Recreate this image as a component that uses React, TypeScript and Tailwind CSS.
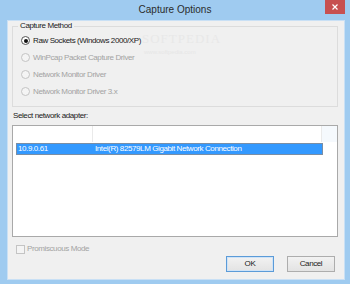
import React from 'react';

const Radio: React.FC<{ label: string; checked?: boolean; disabled?: boolean }> = ({ label, checked, disabled }) => (
  <div className="h-[17px] flex items-center">
    <span
      className={`w-[9px] h-[9px] rounded-full border flex items-center justify-center ${
        disabled ? 'border-[#c4c4c4] bg-[#f4f4f4]' : 'border-[#555] bg-white'
      }`}
    >
      {checked && <span className="w-[4px] h-[4px] rounded-full bg-[#111]" />}
    </span>
    <span className={`ml-[3px] ${disabled ? 'text-[#a3a3a3]' : 'text-[#1a1a1a]'}`}>{label}</span>
  </div>
);

const Button: React.FC<{ label: string; primary?: boolean }> = ({ label, primary }) => (
  <div
    className={`w-[48px] h-[16px] flex items-center justify-center border bg-gradient-to-b from-[#f2f2f2] to-[#e3e3e3] text-[#1a1a1a] ${
      primary ? 'border-[#5b9bd8] shadow-[inset_0_0_0_1px_#cfe3f7]' : 'border-[#adadad]'
    }`}
  >
    {label}
  </div>
);

export default function App() {
  return (
    <div className="w-[350px] h-[284px] bg-[#9fcbf0] flex flex-col overflow-hidden font-['Liberation_Sans',Arial,sans-serif] text-[8px] tracking-[-0.4px] leading-[10px]">
      {/* title bar */}
      <div className="h-[20px] relative flex items-center justify-center">
        <span className="text-[10px] tracking-normal text-[#2b2b2b] leading-[12px]">Capture Options</span>
        <div className="absolute right-[5px] top-0 w-[20px] h-[14px] bg-[#c75050] flex items-center justify-center">
          <svg width="6" height="6" viewBox="0 0 6 6">
            <path d="M0.5 0.5 L5.5 5.5 M5.5 0.5 L0.5 5.5" stroke="#fff" strokeWidth="1.2" />
          </svg>
        </div>
      </div>

      {/* client */}
      <div className="ml-[7px] mr-[5px] mb-[4px] flex-1 border border-[#c9e0f5] bg-[#f0f0f0] relative flex flex-col pl-[4px] pr-[6px] pt-[5px] pb-[7px]">
        {/* watermark */}
        <div className="absolute left-[134px] top-[11px] text-[13px] tracking-[1px] font-['Liberation_Serif',serif] text-[#e8e8e8] leading-[13px] pointer-events-none">
          SOFTPEDIA
        </div>
        <div className="absolute left-[136px] top-[28px] text-[6px] tracking-normal text-[#e6e6e6] leading-[6px] pointer-events-none">
          www.softpedia.com
        </div>

        {/* Capture Method group */}
        <div className="relative h-[81px] border border-[#dcdcdc] pl-[8px] pt-[5px]">
          <span className="absolute left-[5px] -top-[6px] px-[2px] bg-[#f0f0f0] text-[#1a1a1a]">Capture Method</span>
          <Radio label="Raw Sockets (Windows 2000/XP)" checked />
          <Radio label="WinPcap Packet Capture Driver" disabled />
          <Radio label="Network Monitor Driver" disabled />
          <Radio label="Network Monitor Driver 3.x" disabled />
        </div>

        <div className="mt-[4px] pl-[1px] text-[#1a1a1a]">Select network adapter:</div>

        {/* adapter list */}
        <div className="mt-[4px] h-[112px] border border-[#a9a9a9] bg-white flex flex-col">
          <div className="h-[16px] flex">
            <div className="w-[80px] border-r border-[#eaeaea]" />
            <div className="w-[229px] border-r border-[#eaeaea]" />
            <div className="flex-1 bg-[#f5f9fd]" />
          </div>
          <div className="ml-[3px] w-[307px] h-[12px] mt-[1px] bg-[#3399ff] border border-[#7a8ea5] flex items-center text-white">
            <span className="w-[78px] pl-[1px]">10.9.0.61</span>
            <span>Intel(R) 82579LM Gigabit Network Connection</span>
          </div>
        </div>

        {/* promiscuous */}
        <div className="mt-[7px] ml-[4px] flex items-center h-[10px]">
          <span className="w-[9px] h-[9px] border border-[#c4c4c4] bg-[#f4f4f4]" />
          <span className="ml-[2px] text-[#a3a3a3]">Promiscuous Mode</span>
        </div>

        {/* buttons */}
        <div className="mt-auto mr-[3px] flex justify-end gap-[13px]">
          <Button label="OK" primary />
          <Button label="Cancel" />
        </div>
      </div>
    </div>
  );
}
